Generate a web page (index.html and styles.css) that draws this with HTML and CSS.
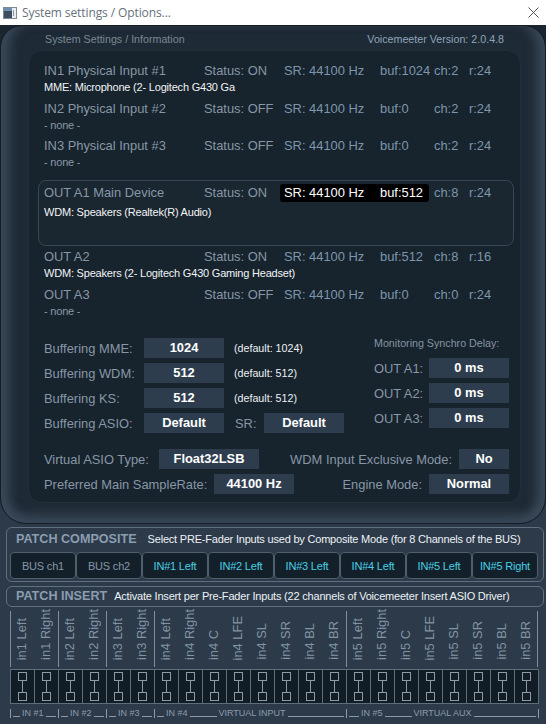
FILE: index.html
```html
<!DOCTYPE html>
<html>
<head>
<meta charset="utf-8">
<title>System settings / Options...</title>
<link rel="stylesheet" href="styles.css">
</head>
<body>
<div class="titlebar">
  <svg class="appicon" width="14" height="12" viewBox="0 0 14 12">
    <rect x="0.5" y="0.5" width="13" height="11" fill="#3d4d5f" stroke="#7f8a95"/>
    <rect x="1" y="1" width="8" height="3" fill="#6f8fb3"/>
    <rect x="9" y="1" width="4" height="10" fill="#e9edf0"/>
    <rect x="10" y="3" width="1" height="6" fill="#8a96a2"/>
  </svg>
  <span class="title">System settings / Options...</span>
  <svg class="close" width="11" height="11" viewBox="0 0 11 11">
    <path d="M0.5 0.5 L10.5 10.5 M10.5 0.5 L0.5 10.5" stroke="#555" stroke-width="1" fill="none"/>
  </svg>
</div>

<div class="fwrap">
<div class="frame">
  <div class="fhead">
    <span class="fh-left">System Settings / Information</span>
    <span class="fh-right">Voicemeeter Version: 2.0.4.8</span>
  </div>
  <div class="panel">
    <div class="dev">
      <div class="dline"><span class="dn">IN1 Physical Input #1</span><span class="ds">Status: ON</span><span class="dv">SR: 44100 Hz</span><span class="dv">buf:1024</span><span class="dv">ch:2</span><span class="dv">r:24</span></div>
      <div class="ddrv">MME: Microphone (2- Logitech G430 Ga</div>
    </div>
    <div class="dev">
      <div class="dline"><span class="dn">IN2 Physical Input #2</span><span class="ds">Status: OFF</span><span class="dv">SR: 44100 Hz</span><span class="dv">buf:0</span><span class="dv">ch:2</span><span class="dv">r:24</span></div>
      <div class="ddrv none">- none -</div>
    </div>
    <div class="dev">
      <div class="dline"><span class="dn">IN3 Physical Input #3</span><span class="ds">Status: OFF</span><span class="dv">SR: 44100 Hz</span><span class="dv">buf:0</span><span class="dv">ch:2</span><span class="dv">r:24</span></div>
      <div class="ddrv none">- none -</div>
    </div>
    <div class="dev main">
      <div class="dline"><span class="dn">OUT A1 Main Device</span><span class="ds">Status: ON</span><span class="dv hl hl-a">SR: 44100 Hz</span><span class="dv hl hl-b">buf:512</span><span class="dv">ch:8</span><span class="dv">r:24</span></div>
      <div class="ddrv">WDM: Speakers (Realtek(R) Audio)</div>
    </div>
    <div class="dev">
      <div class="dline"><span class="dn">OUT A2</span><span class="ds">Status: ON</span><span class="dv">SR: 44100 Hz</span><span class="dv">buf:512</span><span class="dv">ch:8</span><span class="dv">r:16</span></div>
      <div class="ddrv">WDM: Speakers (2- Logitech G430 Gaming Headset)</div>
    </div>
    <div class="dev">
      <div class="dline"><span class="dn">OUT A3</span><span class="ds">Status: OFF</span><span class="dv">SR: 44100 Hz</span><span class="dv">buf:0</span><span class="dv">ch:0</span><span class="dv">r:24</span></div>
      <div class="ddrv none">- none -</div>
    </div>

    <div class="settings">
      <div class="bcol">
        <div class="srow"><span class="slabel">Buffering MME:</span><span class="val w80">1024</span><span class="def">(default: 1024)</span></div>
        <div class="srow"><span class="slabel">Buffering WDM:</span><span class="val w80">512</span><span class="def">(default: 512)</span></div>
        <div class="srow"><span class="slabel">Buffering KS:</span><span class="val w80">512</span><span class="def">(default: 512)</span></div>
        <div class="srow"><span class="slabel">Buffering ASIO:</span><span class="val w80">Default</span><span class="srl">SR:</span><span class="val w80">Default</span></div>
      </div>
      <div class="mcol">
        <div class="mtitle">Monitoring Synchro Delay:</div>
        <div class="mrows">
          <div class="mrow"><span>OUT A1:</span><span class="val w80">0 ms</span></div>
          <div class="mrow"><span>OUT A2:</span><span class="val w80">0 ms</span></div>
          <div class="mrow"><span>OUT A3:</span><span class="val w80">0 ms</span></div>
        </div>
      </div>
    </div>

    <div class="opts">
      <div class="orow">
        <div class="og"><span class="ol1">Virtual ASIO Type:</span><span class="val w100">Float32LSB</span></div>
        <div class="og"><span class="olab">WDM Input Exclusive Mode:</span><span class="val w50">No</span></div>
      </div>
      <div class="orow">
        <div class="og"><span class="ol2">Preferred Main SampleRate:</span><span class="val w80">44100 Hz</span></div>
        <div class="og"><span class="olab">Engine Mode:</span><span class="val w80">Normal</span></div>
      </div>
    </div>
  </div>
</div>
</div>

<div class="patch comp">
  <div class="ptitle"><b>PATCH COMPOSITE</b><span>Select PRE-Fader Inputs used by Composite Mode (for 8 Channels of the BUS)</span></div>
  <div class="pbtns">
    <span class="pbtn bus">BUS ch1</span>
    <span class="pbtn bus">BUS ch2</span>
    <span class="pbtn in">IN#1 Left</span>
    <span class="pbtn in">IN#2 Left</span>
    <span class="pbtn in">IN#3 Left</span>
    <span class="pbtn in">IN#4 Left</span>
    <span class="pbtn in">IN#5 Left</span>
    <span class="pbtn in">IN#5 Right</span>
  </div>
</div>
<div class="patch ins">
  <div class="ptitle pt-ins"><b>PATCH INSERT</b><span>Activate Insert per Pre-Fader Inputs (22 channels of Voicemeeter Insert ASIO Driver)</span></div>
</div>

<div class="igrid">
  <div class="ilabels">
    <div class="vl sepL"><span>in1 Left</span></div>
    <div class="vl"><span>in1 Right</span></div>
    <div class="vl sepL"><span>in2 Left</span></div>
    <div class="vl"><span>in2 Right</span></div>
    <div class="vl sepL"><span>in3 Left</span></div>
    <div class="vl"><span>in3 Right</span></div>
    <div class="vl sepL"><span>in4 Left</span></div>
    <div class="vl"><span>in4 Right</span></div>
    <div class="vl"><span>in4 C</span></div>
    <div class="vl"><span>in4 LFE</span></div>
    <div class="vl"><span>in4 SL</span></div>
    <div class="vl"><span>in4 SR</span></div>
    <div class="vl"><span>in4 BL</span></div>
    <div class="vl"><span>in4 BR</span></div>
    <div class="vl sepL"><span>in5 Left</span></div>
    <div class="vl"><span>in5 Right</span></div>
    <div class="vl"><span>in5 C</span></div>
    <div class="vl"><span>in5 LFE</span></div>
    <div class="vl"><span>in5 SL</span></div>
    <div class="vl"><span>in5 SR</span></div>
    <div class="vl"><span>in5 BL</span></div>
    <div class="vl sepR"><span>in5 BR</span></div>
  </div>
  <div class="icells">
    <div class="cell"><svg width="9" height="29" viewBox="0 0 9 29"><rect x="0.5" y="0.5" width="8" height="8"/><path d="M4.5 9 V20"/><rect x="0.5" y="20.5" width="8" height="8"/></svg></div>
    <div class="cell"><svg width="9" height="29" viewBox="0 0 9 29"><rect x="0.5" y="0.5" width="8" height="8"/><path d="M4.5 9 V20"/><rect x="0.5" y="20.5" width="8" height="8"/></svg></div>
    <div class="cell"><svg width="9" height="29" viewBox="0 0 9 29"><rect x="0.5" y="0.5" width="8" height="8"/><path d="M4.5 9 V20"/><rect x="0.5" y="20.5" width="8" height="8"/></svg></div>
    <div class="cell"><svg width="9" height="29" viewBox="0 0 9 29"><rect x="0.5" y="0.5" width="8" height="8"/><path d="M4.5 9 V20"/><rect x="0.5" y="20.5" width="8" height="8"/></svg></div>
    <div class="cell"><svg width="9" height="29" viewBox="0 0 9 29"><rect x="0.5" y="0.5" width="8" height="8"/><path d="M4.5 9 V20"/><rect x="0.5" y="20.5" width="8" height="8"/></svg></div>
    <div class="cell"><svg width="9" height="29" viewBox="0 0 9 29"><rect x="0.5" y="0.5" width="8" height="8"/><path d="M4.5 9 V20"/><rect x="0.5" y="20.5" width="8" height="8"/></svg></div>
    <div class="cell"><svg width="9" height="29" viewBox="0 0 9 29"><rect x="0.5" y="0.5" width="8" height="8"/><path d="M4.5 9 V20"/><rect x="0.5" y="20.5" width="8" height="8"/></svg></div>
    <div class="cell"><svg width="9" height="29" viewBox="0 0 9 29"><rect x="0.5" y="0.5" width="8" height="8"/><path d="M4.5 9 V20"/><rect x="0.5" y="20.5" width="8" height="8"/></svg></div>
    <div class="cell"><svg width="9" height="29" viewBox="0 0 9 29"><rect x="0.5" y="0.5" width="8" height="8"/><path d="M4.5 9 V20"/><rect x="0.5" y="20.5" width="8" height="8"/></svg></div>
    <div class="cell"><svg width="9" height="29" viewBox="0 0 9 29"><rect x="0.5" y="0.5" width="8" height="8"/><path d="M4.5 9 V20"/><rect x="0.5" y="20.5" width="8" height="8"/></svg></div>
    <div class="cell"><svg width="9" height="29" viewBox="0 0 9 29"><rect x="0.5" y="0.5" width="8" height="8"/><path d="M4.5 9 V20"/><rect x="0.5" y="20.5" width="8" height="8"/></svg></div>
    <div class="cell"><svg width="9" height="29" viewBox="0 0 9 29"><rect x="0.5" y="0.5" width="8" height="8"/><path d="M4.5 9 V20"/><rect x="0.5" y="20.5" width="8" height="8"/></svg></div>
    <div class="cell"><svg width="9" height="29" viewBox="0 0 9 29"><rect x="0.5" y="0.5" width="8" height="8"/><path d="M4.5 9 V20"/><rect x="0.5" y="20.5" width="8" height="8"/></svg></div>
    <div class="cell"><svg width="9" height="29" viewBox="0 0 9 29"><rect x="0.5" y="0.5" width="8" height="8"/><path d="M4.5 9 V20"/><rect x="0.5" y="20.5" width="8" height="8"/></svg></div>
    <div class="cell"><svg width="9" height="29" viewBox="0 0 9 29"><rect x="0.5" y="0.5" width="8" height="8"/><path d="M4.5 9 V20"/><rect x="0.5" y="20.5" width="8" height="8"/></svg></div>
    <div class="cell"><svg width="9" height="29" viewBox="0 0 9 29"><rect x="0.5" y="0.5" width="8" height="8"/><path d="M4.5 9 V20"/><rect x="0.5" y="20.5" width="8" height="8"/></svg></div>
    <div class="cell"><svg width="9" height="29" viewBox="0 0 9 29"><rect x="0.5" y="0.5" width="8" height="8"/><path d="M4.5 9 V20"/><rect x="0.5" y="20.5" width="8" height="8"/></svg></div>
    <div class="cell"><svg width="9" height="29" viewBox="0 0 9 29"><rect x="0.5" y="0.5" width="8" height="8"/><path d="M4.5 9 V20"/><rect x="0.5" y="20.5" width="8" height="8"/></svg></div>
    <div class="cell"><svg width="9" height="29" viewBox="0 0 9 29"><rect x="0.5" y="0.5" width="8" height="8"/><path d="M4.5 9 V20"/><rect x="0.5" y="20.5" width="8" height="8"/></svg></div>
    <div class="cell"><svg width="9" height="29" viewBox="0 0 9 29"><rect x="0.5" y="0.5" width="8" height="8"/><path d="M4.5 9 V20"/><rect x="0.5" y="20.5" width="8" height="8"/></svg></div>
    <div class="cell"><svg width="9" height="29" viewBox="0 0 9 29"><rect x="0.5" y="0.5" width="8" height="8"/><path d="M4.5 9 V20"/><rect x="0.5" y="20.5" width="8" height="8"/></svg></div>
    <div class="cell"><svg width="9" height="29" viewBox="0 0 9 29"><rect x="0.5" y="0.5" width="8" height="8"/><path d="M4.5 9 V20"/><rect x="0.5" y="20.5" width="8" height="8"/></svg></div>
  </div>
  <div class="igroups">
    <div class="grp g48"><span class="ln l7"></span><span class="gt">IN #1</span><span class="ln fl"></span></div>
    <div class="grp g48"><span class="ln l7"></span><span class="gt">IN #2</span><span class="ln fl"></span></div>
    <div class="grp g48"><span class="ln l7"></span><span class="gt">IN #3</span><span class="ln fl"></span></div>
    <div class="grp g192"><span class="ln l7"></span><span class="gt">IN #4</span><span class="ln l27"></span><span class="gt">VIRTUAL INPUT</span><span class="ln fl"></span></div>
    <div class="grp g192 last"><span class="ln l10"></span><span class="gt">IN #5</span><span class="ln l27"></span><span class="gt">VIRTUAL AUX</span><span class="ln fl"></span></div>
  </div>
</div>
</body>
</html>
```

FILE: styles.css
```css
* { box-sizing: border-box; }
html, body { margin: 0; padding: 0; }
body {
  width: 546px;
  height: 724px;
  overflow: hidden;
  background: #2c3a4a;
  font-family: "Liberation Sans", Arial, sans-serif;
  color: #8797a6;
}

/* title bar */
.titlebar {
  height: 25px;
  background: #ffffff;
  display: flex;
  align-items: center;
}
.appicon { margin-left: 3px; margin-right: 5px; flex: none; }
.title {
  font-family: "Open Sans", "Noto Sans", sans-serif;
  font-size: 12px;
  color: #66717c;
  letter-spacing: -0.1px;
}
.close { margin-left: auto; margin-right: 7px; flex: none; }

/* system settings frame */
.fwrap { background: linear-gradient(#1b252f 0, #1b252f 40px, #2c3a4a 40px); }
.frame {
  height: 499px;
  border: 1px solid #151e26;
  border-radius: 22px 22px 26px 26px;
  background: #1e2a35;
  box-shadow: inset 14px 0 12px -6px #3a4959, inset -14px 0 12px -6px #3a4959, inset 0 -14px 12px -6px #3a4959;
  padding: 0 24px 0 27px;
}
.fhead {
  height: 24px;
  padding: 6px 17px 0 17px;
  display: flex;
  justify-content: space-between;
  font-size: 10.7px;
  line-height: 14px;
}
.fh-left { color: #7b8894; }
.fh-right { color: #8ea5ba; }

.panel {
  height: 453px;
  border-radius: 14px;
  background: #17232d;
  border: 1px solid #223039;
  padding: 11px 7px 0 15px;
}

.dev { height: 37.5px; }
.dline {
  display: grid;
  grid-template-columns: 160px 80px 96px 54px 35px auto;
  height: 18px;
  line-height: 18px;
  font-size: 12.9px;
  white-space: nowrap;
}
.dn, .ds { color: #8797a6; }
.dv { color: #7d96ab; }
.ddrv {
  font-size: 11px;
  letter-spacing: -0.2px;
  line-height: 14px;
  height: 14px;
  color: #f2f4f6;
  white-space: nowrap;
}
.ddrv.none { color: #8a98a5; }

.dev.main {
  height: 66px;
  margin: 5.5px -1px 2px -6px;
  border: 1px solid #384755;
  border-radius: 8px;
  background: #1a2630;
  padding: 3px 0 0 5px;
}
.dev.main .ddrv { margin-top: 3px; }
.hl { background: #000; color: #fff; }
.hl-a { margin-left: -4px; padding-left: 4px; border-radius: 3px 0 0 3px; }
.hl-b { margin-right: 5px; border-radius: 0 3px 3px 0; }

/* settings */
.settings {
  display: flex;
  justify-content: space-between;
  align-items: flex-start;
  margin-top: 15px;
  padding-right: 4px;
}
.bcol { display: flex; flex-direction: column; gap: 5px; }
.srow { display: flex; align-items: center; height: 20px; font-size: 12.9px; }
.slabel { width: 100px; }
.val {
  display: block;
  height: 20px;
  line-height: 20px;
  background: #2e3d4e;
  color: #ffffff;
  font-weight: bold;
  font-size: 12.9px;
  text-align: center;
  flex: none;
}
.w50 { width: 50px; }
.w80 { width: 80px; }
.w100 { width: 100px; }
.def { margin-left: 10px; font-size: 10.7px; color: #eef1f4; }
.srl { margin-left: 11px; width: 29px; }

.mcol { width: 135px; margin-top: -2px; }
.mtitle { font-size: 10.7px; line-height: 14px; margin-bottom: 8px; white-space: nowrap; color: #8595a3; }
.mrows { display: flex; flex-direction: column; gap: 5px; }
.mrow { display: flex; justify-content: space-between; align-items: center; height: 20px; font-size: 12.9px; }

.opts { margin-top: 16px; display: flex; flex-direction: column; gap: 5px; padding-right: 4px; }
.orow { display: flex; justify-content: space-between; align-items: center; height: 20px; font-size: 12.9px; }
.og { display: flex; align-items: center; white-space: nowrap; }
.ol1 { width: 115px; }
.ol2 { width: 170px; }
.olab { margin-right: 7px; }

/* patch sections */
.patch {
  margin: 3px 2px 0 6px;
  border: 1px solid #5f7081;
  border-radius: 6px;
}
.comp { height: 55px; padding: 3px 5px 0 3px; }
.ins { margin-top: 4px; height: 21px; padding: 0 5px 0 3px; }
.ptitle {
  display: flex;
  align-items: baseline;
  height: 16px;
  line-height: 16px;
  white-space: nowrap;
}
.pt-ins { height: 19px; line-height: 19px; }
.ptitle b { font-size: 12.6px; color: #8b9db0; margin-left: 6px; margin-right: 11px; }
.pt-ins b { margin-right: 7px; }
.ptitle span { font-size: 11px; letter-spacing: -0.2px; color: #eef2f5; }
.pbtns { display: flex; margin-top: 5px; }
.pbtn {
  width: 66px;
  height: 27px;
  border: 1px solid #4f5f6d;
  border-radius: 4px;
  background: #13202a;
  font-size: 11px;
  letter-spacing: -0.2px;
  display: flex;
  align-items: center;
  justify-content: center;
  white-space: nowrap;
}
.pbtn.bus { color: #8597a8; }
.pbtn.in { color: #48cfe4; }

/* insert grid */
.igrid { margin-left: 10px; width: 529px; }
.ilabels { display: flex; height: 62px; padding-top: 4px; }
.vl {
  width: 24px;
  height: 56px;
  display: flex;
  flex-direction: column;
  justify-content: flex-end;
  align-items: center;
  padding-bottom: 7px;
}
.vl span {
  writing-mode: vertical-rl;
  transform: rotate(180deg);
  font-size: 12.9px;
  line-height: 14px;
  white-space: nowrap;
  color: #8394a3;
}
.sepL { box-shadow: inset 1px 0 0 #7d8d9c; }
.sepR { box-shadow: inset -1px 0 0 #7d8d9c; }

.icells {
  display: flex;
  height: 35px;
  width: 529px;
  border: 1px solid #5d6e7d;
  border-right: none;
  background: #111c25;
}
.cell {
  width: 24px;
  border-right: 1px solid #5d6e7d;
  display: flex;
  align-items: center;
  justify-content: center;
}
.cell svg { fill: none; stroke: #8a9aa9; stroke-width: 1; }

.igroups { display: flex; height: 20px; padding-top: 5px; width: 529px; }
.grp {
  display: flex;
  align-items: flex-end;
  height: 9px;
  border-left: 1px solid #8a9aa8;
  font-size: 9px;
  color: #8d9caa;
}
.g48 { width: 48px; }
.g192 { width: 192px; }
.grp.last { width: 193px; border-right: 1px solid #8a9aa8; }
.ln { height: 1px; background: #8a9aa8; margin-bottom: 1px; flex: none; }
.l7 { width: 7px; margin-left: 2px; }
.l10 { width: 10px; margin-left: 2px; }
.l27 { width: 27px; }
.fl { flex: 1; margin-right: 2px; }
.gt { line-height: 9px; margin: 0 2px; white-space: nowrap; }
```
